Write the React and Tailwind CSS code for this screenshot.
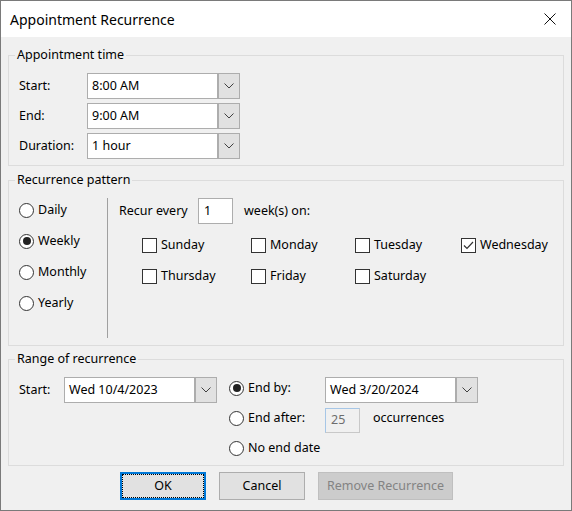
const font = { fontFamily: '"Segoe UI", "Noto Sans", sans-serif' }

function Chevron() {
  return (
    <svg width="10" height="6" viewBox="0 0 10 6" fill="none">
      <polyline points="0.5,0.5 5,5 9.5,0.5" stroke="#404040" strokeWidth="1" />
    </svg>
  )
}

function Combo({ value, width }) {
  return (
    <div className="flex">
      <div className={`${width} h-[26px] border border-[#adadad] bg-white pl-[4px] flex items-center`}>{value}</div>
      <div className="w-[22px] h-[26px] border border-[#adadad] bg-[#e1e1e1] flex items-center justify-center">
        <Chevron />
      </div>
    </div>
  )
}

function Radio({ checked, label }) {
  return (
    <div className="flex items-center">
      <span className="w-[15px] h-[15px] rounded-full border border-[#333] bg-white flex items-center justify-center">
        {checked && <span className="w-[8px] h-[8px] rounded-full bg-[#222]" />}
      </span>
      <span className="ml-[4px]">{label}</span>
    </div>
  )
}

function Checkbox({ checked, label }) {
  return (
    <div className="flex items-center h-[22px]">
      <span className="w-[15px] h-[15px] border border-[#333] bg-white flex items-center justify-center">
        {checked && (
          <svg width="11" height="9" viewBox="0 0 11 9" fill="none">
            <polyline points="1,4.5 4,7.5 10,1" stroke="#333" strokeWidth="1.2" />
          </svg>
        )}
      </span>
      <span className="ml-[4px]">{label}</span>
    </div>
  )
}

function Group({ title, children, className }) {
  return (
    <div className={`border border-[#dcdcdc] ${className}`}>
      <div className="-mt-[9px] ml-[6px] px-[2px] w-fit h-[16px] leading-[16px] bg-[#f0f0f0]">{title}</div>
      {children}
    </div>
  )
}

export default function App() {
  const days = [
    ["Sunday", false],
    ["Monday", false],
    ["Tuesday", false],
    ["Wednesday", true],
    ["Thursday", false],
    ["Friday", false],
    ["Saturday", false],
  ]

  return (
    <div style={font} className="w-[572px] h-[511px] border border-[#7a7a7a] bg-[#f0f0f0] text-[12.5px] text-black flex flex-col">
      {/* title bar */}
      <div className="h-[36px] bg-white flex items-center justify-between pl-[9px] pr-[15px]">
        <span className="text-[14px]">Appointment Recurrence</span>
        <svg width="12" height="12" viewBox="0 0 12 12">
          <path d="M0.5 0.5 L11.5 11.5 M11.5 0.5 L0.5 11.5" stroke="#111" strokeWidth="1" />
        </svg>
      </div>

      <div className="px-[7px] flex flex-col">
        {/* appointment time */}
        <Group title="Appointment time" className="mt-[18px] h-[111px]">
          <div className="mt-[10px] pl-[10px] flex flex-col gap-[4px]">
            {[
              ["Start:", "8:00 AM"],
              ["End:", "9:00 AM"],
              ["Duration:", "1 hour"],
            ].map(([label, value]) => (
              <div key={label} className="flex items-center">
                <span className="w-[68px]">{label}</span>
                <Combo value={value} width="w-[131px]" />
              </div>
            ))}
          </div>
        </Group>

        {/* recurrence pattern */}
        <Group title="Recurrence pattern" className="mt-[14px] h-[166px]">
          <div className="mt-[10px] flex">
            <div className="w-[98px] pl-[10px] pt-[1px] flex flex-col gap-[9px]">
              {["Daily", "Weekly", "Monthly", "Yearly"].map((r) => (
                <div key={r} className="h-[22px] flex items-center">
                  <Radio label={r} checked={r === "Weekly"} />
                </div>
              ))}
            </div>
            <div className="w-px h-[140px] bg-[#a0a0a0]" />
            <div className="ml-[11px] flex flex-col">
              <div className="flex items-center h-[26px]">
                <span className="w-[79px]">Recur every</span>
                <div className="w-[35px] h-[26px] border border-[#adadad] bg-white pl-[5px] flex items-center">1</div>
                <span className="ml-[11px]">week(s) on:</span>
              </div>
              <div className="mt-[10px] ml-[23px] grid grid-cols-[109px_104px_106px_auto] gap-y-[9px]">
                {days.map(([d, c]) => (
                  <Checkbox key={d} label={d} checked={c} />
                ))}
              </div>
            </div>
          </div>
        </Group>

        {/* range of recurrence */}
        <Group title="Range of recurrence" className="mt-[13px] h-[107px]">
          <div className="mt-[6px] pl-[10px] flex">
            <div className="flex items-center h-[26px] mt-[4px]">
              <span className="w-[45px]">Start:</span>
              <Combo value="Wed 10/4/2023" width="w-[131px]" />
            </div>
            <div className="ml-[12px] flex flex-col">
              <div className="h-[30px] flex items-start">
                <div className="w-[96px] h-[30px] flex items-center">
                  <Radio label="End by:" checked />
                </div>
                <div className="mt-[4px]">
                  <Combo value="Wed 3/20/2024" width="w-[131px]" />
                </div>
              </div>
              <div className="h-[30px] flex items-start">
                <div className="w-[96px] h-[30px] flex items-center">
                  <Radio label="End after:" />
                </div>
                <div className="mt-[5px] w-[35px] h-[25px] border border-[#a6c6e6] border-r-[#c8c8c8] border-b-[#c8c8c8] bg-[#f0f0f0] text-[#6d6d6d] pl-[5px] flex items-center">
                  25
                </div>
                <div className="ml-[13px] h-[30px] flex items-center">occurrences</div>
              </div>
              <div className="h-[30px] flex items-center">
                <Radio label="No end date" />
              </div>
            </div>
          </div>
        </Group>

        {/* buttons */}
        <div className="mt-[6px] flex pl-[112px] gap-[13px]">
          <button className="w-[86px] h-[28px] border-2 border-[#0078d7] bg-[#e1e1e1] outline outline-1 outline-dotted outline-black outline-offset-[-3px]">
            OK
          </button>
          <button className="w-[86px] h-[28px] border border-[#adadad] bg-[#e1e1e1]">Cancel</button>
          <button className="w-[135px] h-[28px] border border-[#bfbfbf] bg-[#cccccc] text-[#838383]">
            Remove Recurrence
          </button>
        </div>
      </div>
    </div>
  )
}
